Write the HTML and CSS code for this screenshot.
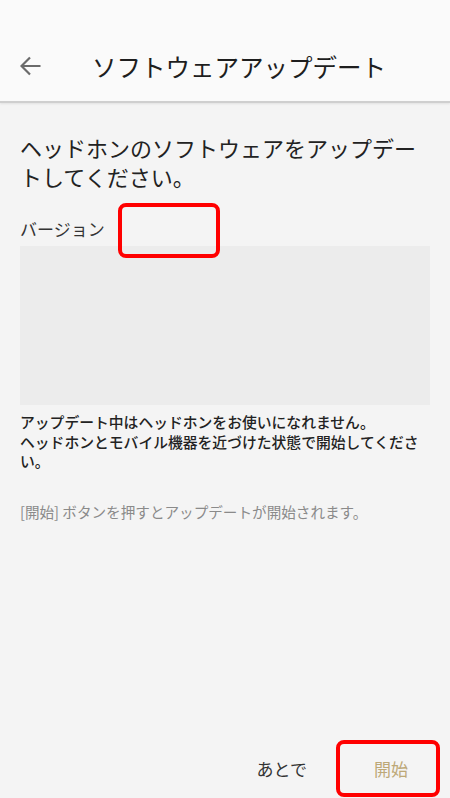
FILE: index.html
```html
<!DOCTYPE html>
<html lang="ja">
<head>
    <meta charset="UTF-8">
    <meta name="viewport" content="width=device-width, initial-scale=1.0">
    <title>ソフトウェアアップデート</title>
    <link rel="stylesheet" href="styles.css">
</head>
<body>
<div class="screen">
    <header class="appbar">
        <a href="#" class="back" aria-label="戻る">
            <svg width="22" height="20" viewBox="0 0 22 20">
                <path d="M1.5 10H20.5 M10 1.5 L1.5 10 L10 18.5" fill="none" stroke="#6b6b6b" stroke-width="2.2"/>
            </svg>
        </a>
        <h1 class="title">ソフトウェアアップデート</h1>
    </header>

    <main class="content">
        <p class="lead">ヘッドホンのソフトウェアをアップデートしてください。</p>
        <div class="version">バージョン</div>
        <div class="release-notes"></div>
        <p class="notice">アップデート中はヘッドホンをお使いになれません。<br>ヘッドホンとモバイル機器を近づけた状態で開始してください。</p>
        <p class="hint">[開始] ボタンを押すとアップデートが開始されます。</p>
    </main>

    <footer class="actions">
        <button class="btn btn-later">あとで</button>
        <button class="btn btn-start">開始</button>
    </footer>

    <div class="mark mark-version"></div>
    <div class="mark mark-start"></div>
</div>
</body>
</html>
```

FILE: styles.css
```css
* { box-sizing: border-box; }
html, body { margin: 0; padding: 0; }
body {
    font-family: "Noto Sans CJK JP", "Noto Sans", sans-serif;
    background: #f4f4f4;
    color: #222;
}

.screen {
    position: relative;
    display: flex;
    flex-direction: column;
    height: 100vh;
    overflow: hidden;
}

.appbar {
    display: flex;
    align-items: center;
    height: 103px;
    padding: 32px 0 0 20px;
    background: #fafafa;
    border-bottom: 2px solid #cfcfcf;
    box-shadow: 0 1px 2px rgba(0, 0, 0, 0.08);
}
.back { display: flex; width: 22px; height: 20px; margin-top: -1px; }
.title {
    margin: 0 0 0 50px;
    font-size: 24.5px;
    font-weight: 400;
    color: #1e1e1e;
    line-height: 32px;
}

.content {
    padding: 0 20px 0 20px;
}
.lead {
    margin: 30px 0 0 0;
    font-size: 22px;
    line-height: 29px;
    color: #222;
}
.version {
    margin-top: 26px;
    font-size: 17px;
    line-height: 24px;
    color: #333;
}
.release-notes {
    margin-top: 5px;
    height: 159px;
    background: #ececec;
}
.notice {
    margin: 7px 0 0 0;
    font-size: 14.8px;
    line-height: 19.5px;
    font-weight: 500;
    color: #222;
}
.hint {
    margin: 31px 0 0 0;
    font-size: 14.6px;
    line-height: 20px;
    color: #8a8a8a;
}

.actions {
    margin-top: auto;
    display: flex;
    justify-content: flex-end;
    align-items: center;
    gap: 67px;
    padding: 0 42px 14px 0;
}
.btn {
    border: 0;
    background: none;
    font-family: inherit;
    font-size: 17px;
    line-height: 30px;
    padding: 0;
    cursor: pointer;
}
.btn-later { color: #333; }
.btn-start { color: #bda877; }

/* annotation boxes */
.mark {
    position: absolute;
    border: 4px solid #f00;
    border-radius: 8px;
}
.mark-version { left: 118px; top: 203px; width: 102px; height: 55px; }
.mark-start { left: 336px; top: 740px; width: 104px; height: 57px; }
```
